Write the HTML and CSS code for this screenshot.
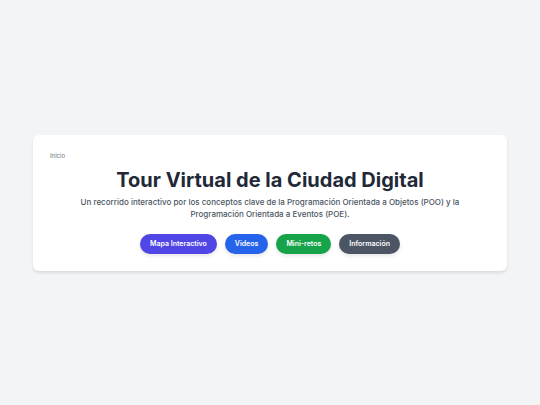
FILE: index.html
```html
<!DOCTYPE html>
<html lang="es">

<head>
    <meta charset="UTF-8">
    <meta name="viewport" content="width=device-width, initial-scale=1.0">
    <title>Tour Virtual de la Ciudad Digital</title>
    <link rel="stylesheet" href="styles.css">
</head>

<body>
    <main class="card">
        <nav class="breadcrumb">Inicio</nav>

        <header class="header">
            <h1 class="title">Tour Virtual de la Ciudad Digital</h1>
            <p class="subtitle">Un recorrido interactivo por los conceptos clave de la Programación Orientada a Objetos (POO) y la Programación Orientada a Eventos (POE).</p>
        </header>

        <div class="buttons">
            <button type="button" class="btn btn-map">Mapa Interactivo</button>
            <button type="button" class="btn btn-videos">Videos</button>
            <button type="button" class="btn btn-retos">Mini-retos</button>
            <button type="button" class="btn btn-info">Información</button>
        </div>
    </main>
</body>

</html>
```

FILE: styles.css
```css
* {
    box-sizing: border-box;
    margin: 0;
    padding: 0;
}

body {
    display: flex;
    align-items: center;
    justify-content: center;
    min-height: 100vh;
    padding: 0 33px;
    background-color: #f3f4f6;
    color: #1f2937;
    font-family: "Inter", sans-serif;
}

.card {
    width: 100%;
    max-width: 1152px;
    padding: 17px;
    background-color: #ffffff;
    border-radius: 6px;
    box-shadow: 0 2px 3px rgba(0, 0, 0, 0.1);
}

.breadcrumb {
    margin-bottom: 6px;
    color: #6b7280;
    font-size: 6px;
    line-height: 8px;
}

.header {
    margin-bottom: 14px;
    text-align: center;
}

.title {
    margin-bottom: 2px;
    font-size: 20px;
    font-weight: 700;
    line-height: 28px;
}

.subtitle {
    max-width: 400px;
    margin: 0 auto;
    color: #4b5563;
    font-size: 8px;
    font-weight: 500;
    line-height: 12px;
}

.buttons {
    display: flex;
    flex-wrap: wrap;
    justify-content: center;
    gap: 8px;
}

.btn {
    padding: 4px 10px;
    border: none;
    border-radius: 10px;
    color: #ffffff;
    font-family: inherit;
    font-size: 7px;
    font-weight: 600;
    line-height: 12px;
    box-shadow: 0 2px 4px rgba(0, 0, 0, 0.1);
    cursor: pointer;
}

.btn-map {
    background-color: #4f46e5;
}

.btn-videos {
    background-color: #2563eb;
}

.btn-retos {
    background-color: #16a34a;
}

.btn-info {
    background-color: #4b5563;
}
```
